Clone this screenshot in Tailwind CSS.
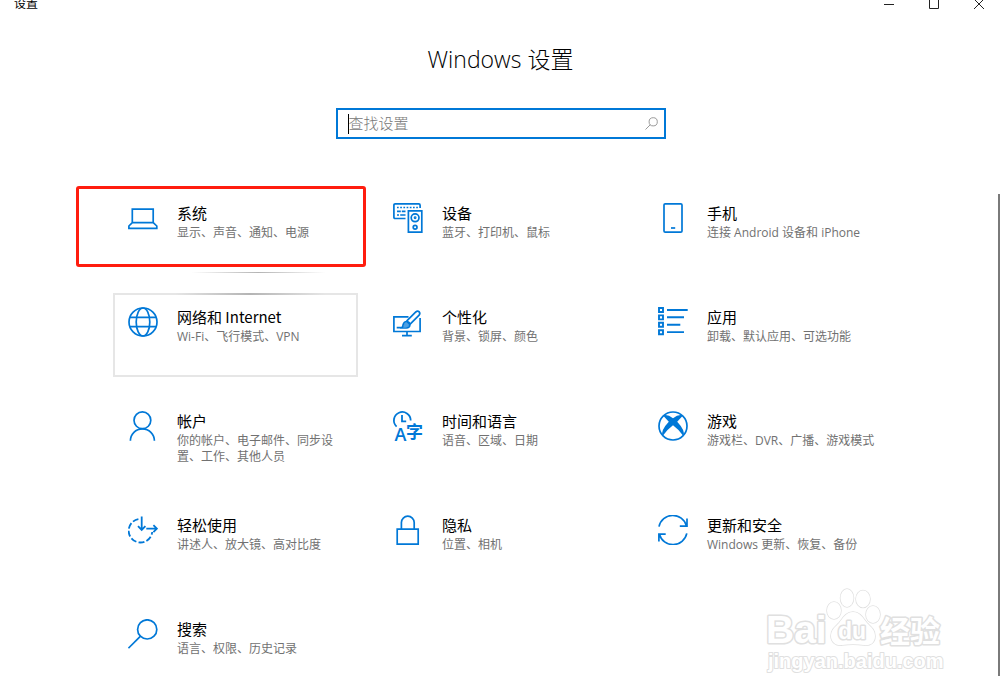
<!DOCTYPE html>
<html lang="zh-CN">
<head>
    <meta charset="UTF-8">
    <meta name="viewport" content="width=device-width, initial-scale=1.0">
    <title>设置</title>
    <script src="https://cdn.jsdelivr.net/npm/@tailwindcss/browser@4"></script>
</head>
<body class="relative min-h-screen overflow-hidden bg-white text-black font-['Open_Sans','Noto_Sans_CJK_SC',sans-serif]">
    <!-- Title bar -->
    <header class="-mt-3 flex h-8 items-center justify-between pl-[14px]">
        <span class="text-xs">设置</span>
        <div class="-mr-px flex">
            <button class="flex h-8 w-[45px] items-center justify-center" aria-label="最小化">
                <svg class="size-[10px]" viewBox="0 0 10 10" stroke="#222" fill="none"><path d="M0 5.5h10"/></svg>
            </button>
            <button class="flex h-8 w-[45px] items-center justify-center" aria-label="最大化">
                <svg class="size-[10px]" viewBox="0 0 10 10" stroke="#222" fill="none"><path d="M.5 .5h9v9h-9z"/></svg>
            </button>
            <button class="flex h-8 w-[45px] items-center justify-center" aria-label="关闭">
                <svg class="size-[10px]" viewBox="0 0 10 10" stroke="#222" fill="none"><path d="M0 0l10 10M10 0L0 10"/></svg>
            </button>
        </div>
    </header>

    <main class="flex flex-col items-center pl-px">
        <h1 class="mt-6 text-[23px] leading-[30px] font-light">Windows 设置</h1>

        <!-- Search -->
        <form class="mt-[34px] flex h-[31px] w-[330px] items-center border-2 border-[#0078d7] pr-[6px] pl-[10px]">
            <span class="h-5 w-px bg-black"></span>
            <input type="text" aria-label="查找设置" placeholder="查找设置" class="min-w-0 flex-1 text-[15px] font-light outline-none placeholder:text-[#767676]">
            <button type="button" aria-label="搜索">
                <svg class="size-[13px]" viewBox="0 0 13 13" fill="none" stroke="#9a9a9a"><circle cx="8.2" cy="4.8" r="4.1"/><path d="M5.3 7.7L.5 12.5"/></svg>
            </button>
        </form>

        <!-- Categories -->
        <nav class="mt-[50px] grid auto-rows-[84px] grid-cols-[repeat(3,245px)] gap-5">
            <a href="#" class="relative flex gap-[19px] pt-[14px] pr-2 pl-[15px]">
                <span class="absolute -top-[3px] -left-[37px] h-[81px] w-[290px] rounded-[3px] border-3 border-[#ff1d0f]"></span>
                <span class="absolute bottom-0 left-[78px] h-px w-[135px] bg-linear-to-r from-transparent via-[#b4b4b4] to-transparent"></span>
                <svg class="size-[30px] shrink-0" viewBox="0 0 30 30" fill="none" stroke="#0078d7" stroke-width="1.7"><path d="M4.3 19.6V6.2h20.9v13.4M4.3 19.6h20.9l3.6 3.4v2.4H.9V23z"/></svg>
                <div>
                    <h2 class="text-[15px] leading-5 font-['Noto_Sans_CJK_SC',sans-serif]">系统</h2>
                    <p class="mt-[2px] text-xs leading-4 text-[#717171]">显示、声音、通知、电源</p>
                </div>
            </a>
            <a href="#" class="flex gap-[19px] pt-[14px] pr-2 pl-[15px]">
                <svg class="size-[30px] shrink-0" viewBox="0 0 30 30" fill="none" stroke="#0078d7" stroke-width="1.7">
                    <path d="M12.5 15.5H2.2Q.9 15.5 .9 14.2V2.2Q.9.9 2.2.9h23.6q1.3 0 1.3 1.3V5"/>
                    <path d="M4 4.5h21" stroke-dasharray="1.7 1.5"/><path d="M4 8.3h8.5" stroke-dasharray="3.8 1"/><path d="M4 12h8.5" stroke-dasharray="2 1.2 5.3"/>
                    <path d="M15.4 7.9h13.4v21.2H15.4z"/><circle cx="22.1" cy="14.8" r="3.9"/><circle cx="22.1" cy="14.8" r=".6"/><circle cx="22.1" cy="24.3" r="1.9"/>
                </svg>
                <div>
                    <h2 class="text-[15px] leading-5 font-['Noto_Sans_CJK_SC',sans-serif]">设备</h2>
                    <p class="mt-[2px] text-xs leading-4 text-[#717171]">蓝牙、打印机、鼠标</p>
                </div>
            </a>
            <a href="#" class="flex gap-[19px] pt-[14px] pr-2 pl-[15px]">
                <svg class="size-[30px] shrink-0" viewBox="0 0 30 30" fill="none" stroke="#0078d7" stroke-width="1.7"><rect x="6" y=".9" width="18" height="28.2" rx="1.2"/><path d="M13 25h4.2"/></svg>
                <div>
                    <h2 class="text-[15px] leading-5 font-['Noto_Sans_CJK_SC',sans-serif]">手机</h2>
                    <p class="mt-[2px] text-xs leading-4 text-[#717171]">连接 Android 设备和 iPhone</p>
                </div>
            </a>

            <a href="#" class="relative flex gap-[19px] border-2 border-[#e6e6e6] pt-3 pr-[6px] pl-[13px]">
                <span class="absolute -top-[2px] left-[60px] h-[2px] w-[150px] bg-linear-to-r from-transparent via-[#b4b4b4] to-transparent"></span>
                <svg class="size-[30px] shrink-0" viewBox="0 0 30 30" fill="none" stroke="#0078d7" stroke-width="1.7"><circle cx="15" cy="15" r="14"/><ellipse cx="15" cy="15" rx="6.8" ry="14"/><path d="M2 10.3h26M2 19.7h26"/></svg>
                <div>
                    <h2 class="text-[15px] leading-5 font-['Noto_Sans_CJK_SC',sans-serif]">网络和 Internet</h2>
                    <p class="mt-[2px] text-xs leading-4 text-[#717171]">Wi-Fi、飞行模式、VPN</p>
                </div>
            </a>
            <a href="#" class="flex gap-[19px] pt-[14px] pr-2 pl-[15px]">
                <svg class="size-[30px] shrink-0" viewBox="0 0 30 30" fill="none" stroke="#0078d7" stroke-width="1.7">
                    <path d="M15.5 9.9H.9v14.6h26.2V11M14 24.5v4M9 28.6h9.8"/>
                    <path d="M13.6 14.2L22.8 5q1.7-1.4 3.3-.2 1.4 1.7 0 3.3l-9.2 9.2M13.6 14.2l3.3 3.1"/>
                    <path d="M3.7 20.6h5q1.2-.6 1.4-2.9.8-3 3.7-3.2 3.1.5 3.1 3.3-.4 3-3.5 3.2H7" />
                    <path d="M10.4 18.3q1.2-3.2 3.8-3l2 2q.2 2.600-3 3H9.600z" fill="#0078d7" stroke="none" opacity=".7"/>
                </svg>
                <div>
                    <h2 class="text-[15px] leading-5 font-['Noto_Sans_CJK_SC',sans-serif]">个性化</h2>
                    <p class="mt-[2px] text-xs leading-4 text-[#717171]">背景、锁屏、颜色</p>
                </div>
            </a>
            <a href="#" class="flex gap-[19px] pt-[14px] pr-2 pl-[15px]">
                <svg class="size-[30px] shrink-0" viewBox="0 0 30 30" fill="none" stroke="#0078d7" stroke-width="1.9"><path d="M1 1h4v4H1zM1 8.400h4v4H1zM1 15.800h4v4H1zM1 23.200h4v4H1zM9 3h20.7M9 10.2h17M9 17.7h13.3M9 25.1h17"/></svg>
                <div>
                    <h2 class="text-[15px] leading-5 font-['Noto_Sans_CJK_SC',sans-serif]">应用</h2>
                    <p class="mt-[2px] text-xs leading-4 text-[#717171]">卸载、默认应用、可选功能</p>
                </div>
            </a>

            <a href="#" class="flex gap-[19px] pt-[14px] pr-2 pl-[15px]">
                <svg class="size-[30px] shrink-0" viewBox="0 0 30 30" fill="none" stroke="#0078d7" stroke-width="1.7"><circle cx="14.4" cy="9.3" r="8.4"/><path d="M2.4 29.8a12 12 0 0 1 24 0"/></svg>
                <div>
                    <h2 class="text-[15px] leading-5 font-['Noto_Sans_CJK_SC',sans-serif]">帐户</h2>
                    <p class="mt-[2px] text-xs leading-4 text-[#717171]">你的帐户、电子邮件、同步设置、工作、其他人员</p>
                </div>
            </a>
            <a href="#" class="flex gap-[19px] pt-[14px] pr-2 pl-[15px]">
                <svg class="size-[30px] shrink-0 overflow-visible" viewBox="0 0 30 30" fill="none" stroke="#0078d7" stroke-width="1.8">
                    <path d="M3.6 15.6A8.4 8.4 0 1 1 17.7 9.5M9 4v6.3h4.2"/>
                    <g fill="#0078d7" stroke="none"><text x="1.4" y="29.7" font-size="18" font-weight="600">A</text><text x="13" y="26.600" font-size="17" font-weight="700">字</text></g>
                </svg>
                <div>
                    <h2 class="text-[15px] leading-5 font-['Noto_Sans_CJK_SC',sans-serif]">时间和语言</h2>
                    <p class="mt-[2px] text-xs leading-4 text-[#717171]">语音、区域、日期</p>
                </div>
            </a>
            <a href="#" class="flex gap-[19px] pt-[14px] pr-2 pl-[15px]">
                <svg class="size-[30px] shrink-0" viewBox="0 0 30 30" fill="none" stroke="#0078d7" stroke-width="1.7"><circle cx="15" cy="15" r="14"/><path d="M5 4.6Q9 2.6 15 7.2 21 2.6 25 4.6L19.2 10.8Q27.5 19.5 25.6 25.3 21 18.5 15 14.2 9 18.5 4.4 25.3 2.5 19.5 10.8 10.8z" fill="#0078d7" stroke="none"/></svg>
                <div>
                    <h2 class="text-[15px] leading-5 font-['Noto_Sans_CJK_SC',sans-serif]">游戏</h2>
                    <p class="mt-[2px] text-xs leading-4 text-[#717171]">游戏栏、DVR、广播、游戏模式</p>
                </div>
            </a>

            <a href="#" class="flex gap-[19px] pt-[14px] pr-2 pl-[15px]">
                <svg class="size-[30px] shrink-0" viewBox="0 0 30 30" fill="none" stroke="#0078d7" stroke-width="1.8"><path d="M10.4 4.1A11.8 11.8 0 1 0 24.2 17" stroke-dasharray="6 2.2"/><path d="M13.7 1.5v13.2M10 11.2l3.7 3.7 3.7-3.7M18.3 13.7h10.4M25.4 10.2l3.5 3.5-3.5 3.5"/></svg>
                <div>
                    <h2 class="text-[15px] leading-5 font-['Noto_Sans_CJK_SC',sans-serif]">轻松使用</h2>
                    <p class="mt-[2px] text-xs leading-4 text-[#717171]">讲述人、放大镜、高对比度</p>
                </div>
            </a>
            <a href="#" class="flex gap-[19px] pt-[14px] pr-2 pl-[15px]">
                <svg class="size-[30px] shrink-0" viewBox="0 0 30 30" fill="none" stroke="#0078d7" stroke-width="1.7"><path d="M4.2 14.2h21v14.9h-21zM8.4 14.2V7.6a6.4 6.4 0 0 1 12.8 0v6.6"/></svg>
                <div>
                    <h2 class="text-[15px] leading-5 font-['Noto_Sans_CJK_SC',sans-serif]">隐私</h2>
                    <p class="mt-[2px] text-xs leading-4 text-[#717171]">位置、相机</p>
                </div>
            </a>
            <a href="#" class="flex gap-[19px] pt-[14px] pr-2 pl-[15px]">
                <svg class="size-[30px] shrink-0" viewBox="0 0 30 30" fill="none" stroke="#0078d7" stroke-width="1.7"><path d="M1 11.6A14.1 14.1 0 0 1 28.4 10.8M29 3.6v7.5h-7.2M28.8 18.4A14.1 14.1 0 0 1 1.4 19.2M.9 26.6v-7.5h6.8"/></svg>
                <div>
                    <h2 class="text-[15px] leading-5 font-['Noto_Sans_CJK_SC',sans-serif]">更新和安全</h2>
                    <p class="mt-[2px] text-xs leading-4 text-[#717171]">Windows 更新、恢复、备份</p>
                </div>
            </a>

            <a href="#" class="flex gap-[19px] pt-[14px] pr-2 pl-[15px]">
                <svg class="size-[30px] shrink-0" viewBox="0 0 30 30" fill="none" stroke="#0078d7" stroke-width="1.7"><circle cx="19.2" cy="10.4" r="9.6"/><path d="M12.3 17.3L.4 29.2"/></svg>
                <div>
                    <h2 class="text-[15px] leading-5 font-['Noto_Sans_CJK_SC',sans-serif]">搜索</h2>
                    <p class="mt-[2px] text-xs leading-4 text-[#717171]">语言、权限、历史记录</p>
                </div>
            </a>
        </nav>
    </main>

    <!-- Scrollbar thumb -->
    <div class="absolute top-[194px] right-0 bottom-5 w-[2px] bg-[#7a7a7a]"></div>

    <!-- Watermark -->
    <svg class="absolute right-[52px] bottom-5 h-[90px] w-[182px] font-['Liberation_Sans','Noto_Sans_CJK_SC',sans-serif] font-bold" viewBox="0 0 182 90" fill="#fff" stroke="#e0e0e0" stroke-width="3" stroke-linejoin="round" paint-order="stroke">
        <text x="0" y="57" font-size="39">Bai</text>
        <g stroke-width="1.5">
            <ellipse cx="68" cy="24.5" rx="7" ry="8.5"/><ellipse cx="81" cy="12" rx="6.5" ry="9"/><ellipse cx="97" cy="13" rx="7" ry="8.5"/><ellipse cx="107" cy="28.5" rx="7" ry="8.5"/>
            <path d="M87 26c7 0 10 6 14 11 4 4 8 7 8 13 0 7-5 10-11 9-7-1-15-1-22 0-6 1-11-3-11-9 0-6 4-9 8-13 4-5 7-11 14-11z"/>
        </g>
        <text x="72" y="53" font-size="23">du</text>
        <text x="114" y="56" font-size="30">经验</text>
        <text x="2" y="82" font-size="20" stroke-width="2">jingyan.baidu.com</text>
    </svg>
</body>
</html>
